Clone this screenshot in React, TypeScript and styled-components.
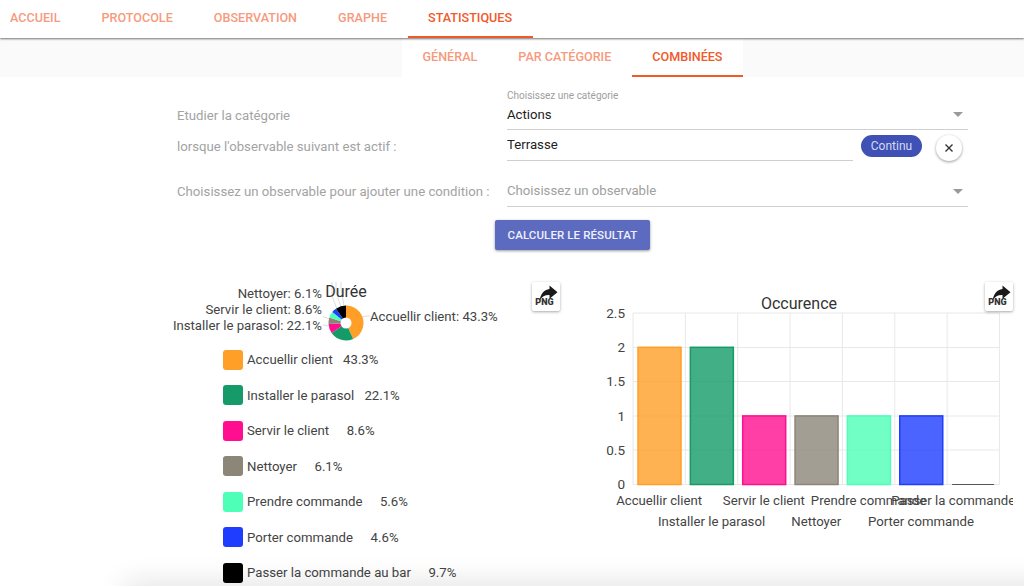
import styled, {createGlobalStyle} from 'styled-components'

const GlobalStyle = createGlobalStyle`
  html, body {
    margin: 0;
    height: 586px;
    overflow: hidden;
    background: #fff;
    font-family: Roboto, "Liberation Sans", sans-serif;
  }
`

const slices = [
  {name: 'Accuellir client', pct: 43.3, count: 2, color: '#ff9f27'},
  {name: 'Installer le parasol', pct: 22.1, count: 2, color: '#149b68'},
  {name: 'Servir le client', pct: 8.6, count: 1, color: '#ff0f8f'},
  {name: 'Nettoyer', pct: 6.1, count: 1, color: '#8c8678'},
  {name: 'Prendre commande', pct: 5.6, count: 1, color: '#4effb8'},
  {name: 'Porter commande', pct: 4.6, count: 1, color: '#1e3dff'},
  {name: 'Passer la commande au bar', pct: 9.7, count: 0, color: '#000000'},
]

const Page = styled.div`
  position: relative;
  width: 1024px;
  height: 586px;
  overflow: hidden;
`

const TopBar = styled.nav`
  display: flex;
  height: 38px;
  position: relative;
  z-index: 1;
  box-shadow: 0 1px 2px rgba(0, 0, 0, 0.55);
  background: #fff;
`

const Tab = styled.div<{$active?: boolean; $first?: boolean}>`
  display: flex;
  align-items: center;
  box-sizing: border-box;
  padding: 0 20.5px 0 ${(p) => (p.$first ? '10px' : '20.5px')};
  font-size: 12.6px;
  font-weight: 500;
  color: ${(p) => (p.$active ? '#f1592a' : '#f69a7d')};
  border-bottom: 2px solid ${(p) => (p.$active ? '#f1592a' : 'transparent')};
  text-transform: uppercase;
`

const TopTab = styled(Tab)`
  padding-bottom: 2px;
`

const SubBar = styled.div`
  display: flex;
  justify-content: center;
  height: 39px;
  background: #fafafa;
  padding-left: 121px;
`

const SubTabs = styled.div`
  display: flex;
  background: #fff;
`

const Form = styled.div`
  width: 791px;
  margin: 13px 0 0 177px;
  display: grid;
  grid-template-columns: 330px 461px;
`

const Label = styled.div<{$lift?: number}>`
  align-self: end;
  font-size: 13.2px;
  color: #a3a3a3;
  padding-bottom: ${(p) => 7 + (p.$lift ?? 0)}px;
`

const FieldLabel = styled.div`
  font-size: 10px;
  line-height: 12px;
  color: #9e9e9e;
  margin-bottom: 5px;
`

const Field = styled.div`
  border-bottom: 1px solid #cfcfcf;
  position: relative;
  font-size: 13.2px;
  color: #222;
  line-height: 16px;
  padding-bottom: 7px;
`

const CategoryField = styled(Field)`
  padding-bottom: 6px;
`

const Arrow = styled.span`
  position: absolute;
  right: 5px;
  bottom: 12px;
  border: 5px solid transparent;
  border-bottom: 0;
  border-top-color: #9a9a9a;
`

const ConditionRow = styled.div`
  display: flex;
  align-items: flex-start;
  height: 31px;
`

const TextField = styled(Field)`
  flex: 0 0 346px;
  box-sizing: border-box;
  height: 31px;
  padding-top: 7px;
`

const ContinuButton = styled.button`
  width: 61px;
  height: 22px;
  margin: 5px 0 0 8px;
  padding: 0;
  border: 0;
  border-radius: 11px;
  background: #3f51b5;
  color: #d5daf2;
  font: 400 12px Roboto, sans-serif;
`

const CloseButton = styled.button`
  display: flex;
  align-items: center;
  justify-content: center;
  width: 26px;
  height: 26px;
  margin: 5px 0 0 14px;
  padding: 0;
  border: 0;
  border-radius: 50%;
  background: #fff;
  box-shadow: 0 1px 3px rgba(0, 0, 0, 0.4);
`

const PlaceholderField = styled(Field)`
  margin-top: 15px;
  padding-top: 7px;
  color: #a0a0a0;
`

const Actions = styled.div`
  grid-column: 1 / 3;
  display: flex;
  justify-content: center;
  margin-top: 13px;
`

const PrimaryButton = styled.button`
  width: 155px;
  height: 30px;
  padding: 0;
  border: 0;
  border-radius: 2px;
  background: #5c6bc0;
  color: #eef0fa;
  font: 500 11.5px Roboto, sans-serif;
  text-transform: uppercase;
  letter-spacing: 0.1px;
  box-shadow: 0 1px 3px rgba(0, 0, 0, 0.4);
`

const Charts = styled.div`
  display: flex;
  margin-top: 32px;
`

const PiePanel = styled.section`
  position: relative;
  box-sizing: border-box;
  width: 418px;
  margin-left: 172px;
`

const BarPanel = styled.section`
  position: relative;
  flex: 0 0 423px;
  height: 254px;
`

const ChartSvg = styled.svg`
  display: block;
  font-family: Roboto, sans-serif;
  fill: #444;
`

const PngButton = styled.div<{$right: number}>`
  position: absolute;
  top: 0;
  right: ${(p) => p.$right}px;
  width: 28px;
  height: 29px;
  box-sizing: border-box;
  padding-top: 2px;
  border-radius: 2px;
  background: #fff;
  box-shadow: 0 1px 3px rgba(0, 0, 0, 0.35);
  display: flex;
  flex-direction: column;
  align-items: center;
`

const PngGlyph = styled.svg`
  display: block;
  margin-left: 4px;
`

const PngText = styled.span`
  font-size: 9px;
  font-weight: 900;
  line-height: 9px;
  margin: -6px 0 0 -3px;
  color: #333;
`

const Legend = styled.ul`
  list-style: none;
  margin: 0 0 0 51px;
  padding: 0;
`

const LegendRow = styled.li`
  display: flex;
  align-items: center;
  height: 35.5px;
  font-size: 13.2px;
  color: #444;
`

const Swatch = styled.span<{$color: string}>`
  width: 20px;
  height: 20px;
  border-radius: 3px;
  margin-right: 4px;
  background: ${(p) => p.$color};
`

const LegendValue = styled.span`
  width: 45.5px;
  text-align: right;
`

const BottomFade = styled.div`
  position: absolute;
  top: 100%;
  left: 125px;
  right: -40px;
  height: 20px;
  box-shadow: 0 0 30px rgba(0, 0, 0, 0.16);
  pointer-events: none;
`

function ExportButton({right}: {right: number}) {
  return (
    <PngButton $right={right}>
      <PngGlyph width="22" height="20" viewBox="0 0 22 20">
        <path d="M12.5 1.5l8 6.8-8 6.5v-3.7C8 10.9 5 12.5 2.8 16.5 3.2 10.5 6.8 5.6 12.5 5z" fill="#1a1a1a" />
      </PngGlyph>
      <PngText>PNG</PngText>
    </PngButton>
  )
}

const polar = (cx: number, cy: number, r: number, pct: number) => {
  const a = (pct / 100) * Math.PI * 2
  return [cx + r * Math.sin(a), cy - r * Math.cos(a)]
}

function PieChart() {
  const cx = 174
  const cy = 41
  let start = 0
  return (
    <ChartSvg width="340" height="60" viewBox="0 0 340 60">
      <g stroke="#ddd" fill="none">
        <path d="M190 35L195 34H198" />
        <path d="M158 37L152 35H151" />
        <path d="M157 44L152 43H151" />
        <path d="M165 27L160 14V0" />
        <path d="M169 25L164 10V0" />
        <path d="M172 24L169 6V0" />
      </g>
      {slices.map((s) => {
        const end = start + s.pct
        const [x1, y1] = polar(cx, cy, 17.5, start)
        const [x2, y2] = polar(cx, cy, 17.5, end)
        const d = `M${cx} ${cy}L${x1} ${y1}A17.5 17.5 0 ${s.pct > 50 ? 1 : 0} 1 ${x2} ${y2}Z`
        start = end
        return <path key={s.name} d={d} fill={s.color} />
      })}
      <circle cx={cx} cy={cy} r="5.5" fill="#fff" />
      <text x="174" y="15" textAnchor="middle" fontSize="16" fill="#333">Durée</text>
      <g fontSize="13.2" textAnchor="end">
        <text x="150" y="15.5">Nettoyer: 6.1%</text>
        <text x="150" y="31.5">Servir le client: 8.6%</text>
        <text x="150" y="47.5">Installer le parasol: 22.1%</text>
      </g>
      <text x="198" y="39" fontSize="13.2">Accuellir client: 43.3%</text>
    </ChartSvg>
  )
}

const ticks = [
  {label: '2.5', y: 31},
  {label: '2', y: 65.5},
  {label: '1.5', y: 99.5},
  {label: '1', y: 134},
  {label: '0.5', y: 168},
  {label: '0', y: 202.5},
]

function BarChart() {
  const left = 43
  const step = 52.35
  const bottom = 202.5
  const perUnit = 68.6
  return (
    <ChartSvg width="423" height="254" viewBox="0 0 423 254">
      <text x="209" y="27" textAnchor="middle" fontSize="16" fill="#333">Occurence</text>
      <g stroke="#e8e8e8">
        {ticks.map((t) => (
          <line key={t.label} x1={left} x2={left + step * 7} y1={t.y} y2={t.y} />
        ))}
        {Array.from({length: 8}, (_, i) => (
          <line key={i} x1={left + step * i} x2={left + step * i} y1="31" y2={bottom} />
        ))}
      </g>
      <g fontSize="13.5" textAnchor="end">
        {ticks.map((t) => (
          <text key={t.label} x="35" y={t.y + 4.5}>{t.label}</text>
        ))}
      </g>
      {slices.map((s, i) => {
        const x = left + step * i + 5
        if (!s.count) {
          return <line key={s.name} x1={x} x2={x + 42} y1={bottom} y2={bottom} stroke="#555" strokeWidth="1.2" />
        }
        const h = s.count * perUnit
        return (
          <rect
            key={s.name}
            x={x}
            y={bottom - h}
            width="43"
            height={h}
            fill={s.color}
            fillOpacity="0.8"
            stroke={s.color}
            strokeWidth="1.5"
          />
        )
      })}
      <g fontSize="13.2" textAnchor="middle">
        {slices.map((s, i) => (
          <text key={s.name} x={left + step * (i + 0.5)} y={i % 2 ? 244 : 223}>{s.name}</text>
        ))}
      </g>
    </ChartSvg>
  )
}

export default function App() {
  return (
    <Page>
      <GlobalStyle />
      <TopBar>
        <TopTab $first>Accueil</TopTab>
        <TopTab>Protocole</TopTab>
        <TopTab>Observation</TopTab>
        <TopTab>Graphe</TopTab>
        <TopTab $active>Statistiques</TopTab>
      </TopBar>
      <SubBar>
        <SubTabs>
          <Tab>Général</Tab>
          <Tab>Par catégorie</Tab>
          <Tab $active>Combinées</Tab>
        </SubTabs>
      </SubBar>
      <Form>
        <Label>Etudier la catégorie</Label>
        <CategoryField>
          <FieldLabel>Choisissez une catégorie</FieldLabel>
          Actions
          <Arrow />
        </CategoryField>
        <Label>lorsque l'observable suivant est actif :</Label>
        <ConditionRow>
          <TextField>Terrasse</TextField>
          <ContinuButton>Continu</ContinuButton>
          <CloseButton>
            <svg width="10" height="10" viewBox="0 0 10 10">
              <path d="M1.5 1.5l7 7M8.5 1.5l-7 7" stroke="#333" strokeWidth="1.4" />
            </svg>
          </CloseButton>
        </ConditionRow>
        <Label $lift={1}>Choisissez un observable pour ajouter une condition :</Label>
        <PlaceholderField>
          Choisissez un observable
          <Arrow />
        </PlaceholderField>
        <Actions>
          <PrimaryButton>Calculer le résultat</PrimaryButton>
        </Actions>
      </Form>
      <Charts>
        <PiePanel>
          <PieChart />
          <ExportButton right={30} />
          <Legend>
            {slices.map((s) => (
              <LegendRow key={s.name}>
                <Swatch $color={s.color} />
                {s.name}
                <LegendValue>{s.pct}%</LegendValue>
              </LegendRow>
            ))}
          </Legend>
        </PiePanel>
        <BarPanel>
          <BarChart />
          <ExportButton right={0} />
        </BarPanel>
      </Charts>
      <BottomFade />
    </Page>
  )
}
